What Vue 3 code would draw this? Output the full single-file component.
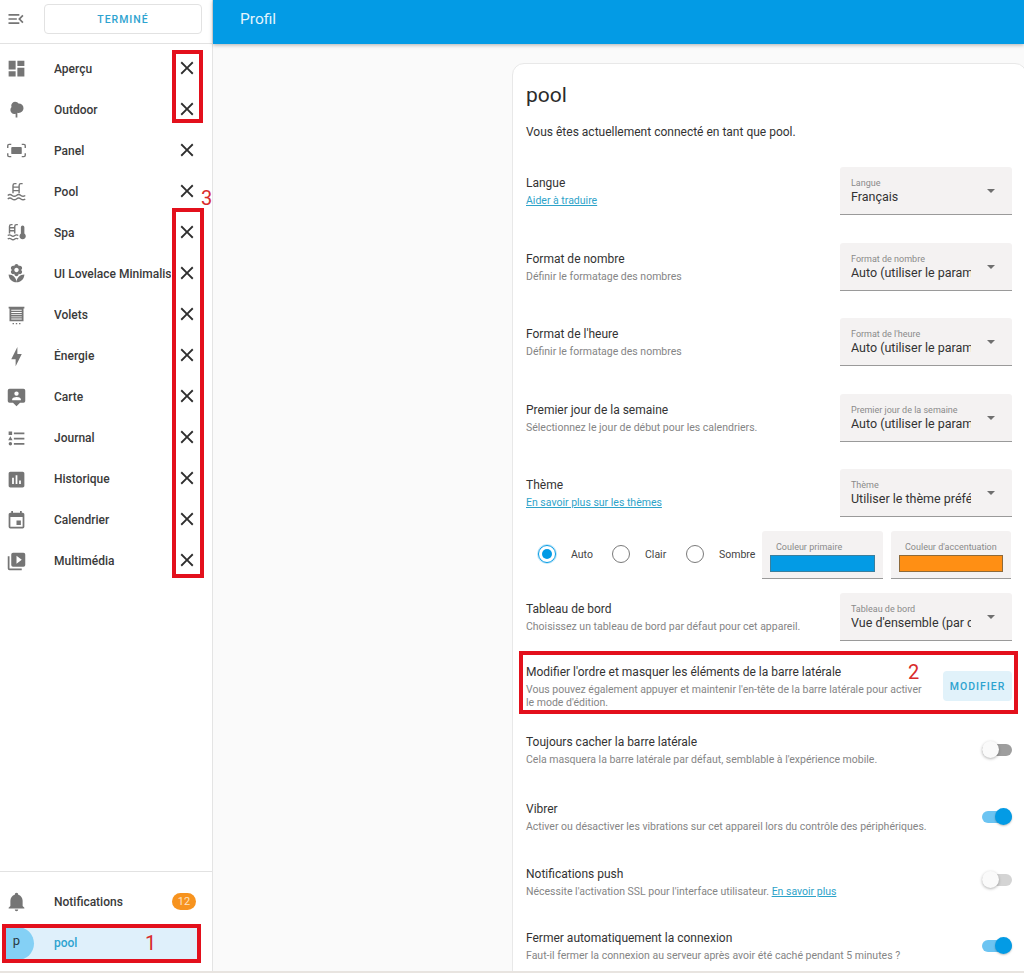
<script setup>
const closeIcon = 'M19,6.41L17.59,5L12,10.59L6.41,5L5,6.41L10.59,12L5,17.59L6.41,19L12,13.41L17.59,19L19,17.59L13.41,12L19,6.41Z'
const menuOpen = 'M21,15.61L19.59,17L14.58,12L19.59,7L21,8.39L17.44,12L21,15.61M3,6H16V8H3V6M3,13V11H13V13H3M3,18V16H16V18H3Z'
const bell = 'M21,19V20H3V19L5,17V11C5,7.9 7.03,5.17 10,4.29C10,4.19 10,4.1 10,4A2,2 0 0,1 12,2A2,2 0 0,1 14,4C14,4.1 14,4.19 14,4.29C16.97,5.17 19,7.9 19,11V17L21,19M14,21A2,2 0 0,1 12,23A2,2 0 0,1 10,21'

const navItems = [
  { label: 'Aperçu', d: 'M13,3V9H21V3M13,21H21V11H13M3,21H11V15H3M3,13H11V3H3V13Z' },
  { label: 'Outdoor', d: 'M11,21V16.74C10.53,16.91 10.03,17 9.5,17C7,17 5,15 5,12.5C5,11.23 5.5,10.09 6.36,9.27C6.13,8.73 6,8.13 6,7.5C6,5 8,3 10.5,3C12.06,3 13.44,3.8 14.25,5C14.33,5 14.41,5 14.5,5A5.5,5.5 0 0,1 20,10.5A5.5,5.5 0 0,1 14.5,16C14,16 13.5,15.93 13,15.79V21H11Z' },
  { label: 'Panel', d: 'M7,8H17A1,1 0 0,1 18,9V15A1,1 0 0,1 17,16H7A1,1 0 0,1 6,15V9A1,1 0 0,1 7,8Z', stroke: 'M2 9V6.5A1.5 1.5 0 013.5 5H6M18 5h2.5A1.5 1.5 0 0122 6.5V9M22 15v2.5a1.5 1.5 0 01-1.5 1.5H18M6 19H3.5A1.5 1.5 0 012 17.5V15' },
  { label: 'Pool', stroke: 'M8 14V5a2 2 0 012-2h2M15 14V5a2 2 0 012-2h2M8 7h7M8 11h7M2 16.5q2.5-2 5 0t5 0 5 0 5 0M2 20.5q2.5-2 5 0t5 0 5 0 5 0' },
  { label: 'Spa', d: 'M19 4a2 2 0 00-2 2v7.2a3.6 3.6 0 104 0V6a2 2 0 00-2-2Z', stroke: 'M4 13V5a2 2 0 012-2h1.5M10 13V5a2 2 0 012-2h1.5M4 6.5h6M4 10h6M2 15.5q2 -1.6 4 0t4 0 4 0M2 19.5q2 -1.6 4 0t4 0 4 0' },
  { label: 'UI Lovelace Minimalist', d: 'M12 22c4.97 0 9-4.03 9-9-4.97 0-9 4.03-9 9zM5.6 10.25c0 1.38 1.12 2.5 2.5 2.5.53 0 1.01-.16 1.42-.44l-.02.19c0 1.38 1.12 2.5 2.5 2.5s2.5-1.12 2.5-2.5l-.02-.19c.4.28.89.44 1.42.44 1.38 0 2.5-1.12 2.5-2.5 0-1-.59-1.85-1.43-2.25.84-.4 1.43-1.25 1.43-2.25 0-1.38-1.12-2.5-2.5-2.5-.53 0-1.01.16-1.42.44l.02-.19C14.5 2.12 13.38 1 12 1S9.5 2.12 9.5 3.5l.02.19c-.4-.28-.89-.44-1.42-.44-1.38 0-2.5 1.12-2.5 2.5 0 1 .59 1.85 1.43 2.25-.84.4-1.43 1.25-1.43 2.25zM12 5.5c1.38 0 2.5 1.12 2.5 2.5s-1.12 2.5-2.5 2.5S9.5 9.38 9.5 8s1.12-2.5 2.5-2.5zM3 13c0 4.97 4.03 9 9 9 0-4.97-4.03-9-9-9z' },
  { label: 'Volets', d: 'M3 2h18v2h-1v14.5H4V4H3V2Zm3 3.5v1h12v-1H6Zm0 2.5v1h12V8H6Zm0 2.5v1h12v-1H6Zm0 2.5v1h12v-1H6Zm0 2.5v1h12v-1H6ZM7.5 20.5h1.6v1.6H7.5v-1.6Zm3.7 0h1.6v1.6h-1.6v-1.6Zm3.7 0h1.6v1.6h-1.6v-1.6Z' },
  { label: 'Énergie', d: 'M11 15H6L13 1V9H18L11 23V15Z' },
  { label: 'Carte', d: 'M4 2h16a2 2 0 012 2v12a2 2 0 01-2 2h-4l-4 4-4-4H4a2 2 0 01-2-2V4a2 2 0 012-2zm8 3a2.5 2.5 0 100 5 2.5 2.5 0 000-5zm-5 10h10v-1c0-1.66-3.34-2.5-5-2.5S7 12.34 7 14v1z' },
  { label: 'Journal', d: 'M5,9.5L7.5,14H2.5L5,9.5M3,4H7V8H3V4M5,20A2,2 0 0,0 7,18A2,2 0 0,0 5,16A2,2 0 0,0 3,18A2,2 0 0,0 5,20M9,5V7H21V5H9M9,19H21V17H9V19M9,13H21V11H9V13Z' },
  { label: 'Historique', d: 'M5 3H19C20.1 3 21 3.9 21 5V19C21 20.1 20.1 21 19 21H5C3.9 21 3 20.1 3 19V5C3 3.9 3.9 3 5 3ZM7 10V17H9V10H7ZM11 7V17H13V7H11ZM15 13V17H17V13H15Z' },
  { label: 'Calendrier', d: 'M19,19H5V8H19M16,1V3H8V1H6V3H5C3.89,3 3,3.89 3,5V19A2,2 0 0,0 5,21H19A2,2 0 0,0 21,19V5C21,3.89 20.1,3 19,3H18V1M17,12H12V17H17V12Z' },
  { label: 'Multimédia', d: 'M4,6H2V20A2,2 0 0,0 4,22H18V20H4V6M8,2H20A2,2 0 0,1 22,4V16A2,2 0 0,1 20,18H8A2,2 0 0,1 6,16V4A2,2 0 0,1 8,2M12,14.5L18,10L12,5.5V14.5Z' }
]

const topRows = [
  { title: 'Langue', link: 'Aider à traduire', label: 'Langue', value: 'Français' },
  { title: 'Format de nombre', desc: 'Définir le formatage des nombres', label: 'Format de nombre', value: 'Auto (utiliser le paramètre)' },
  { title: "Format de l'heure", desc: 'Définir le formatage des nombres', label: "Format de l'heure", value: 'Auto (utiliser le paramètre)' },
  { title: 'Premier jour de la semaine', desc: 'Sélectionnez le jour de début pour les calendriers.', label: 'Premier jour de la semaine', value: 'Auto (utiliser le paramètre)' },
  { title: 'Thème', link: 'En savoir plus sur les thèmes', label: 'Thème', value: 'Utiliser le thème préféré' }
]

const radios = [
  { label: 'Auto', checked: true },
  { label: 'Clair' },
  { label: 'Sombre' }
]

const toggles = [
  { title: 'Toujours cacher la barre latérale', desc: 'Cela masquera la barre latérale par défaut, semblable à l\'expérience mobile.', state: 'off' },
  { title: 'Vibrer', desc: 'Activer ou désactiver les vibrations sur cet appareil lors du contrôle des périphériques.', state: 'on' },
  { title: 'Notifications push', desc: 'Nécessite l\'activation SSL pour l\'interface utilisateur.', more: 'En savoir plus', state: 'disabled' },
  { title: 'Fermer automatiquement la connexion', desc: 'Faut-il fermer la connexion au serveur après avoir été caché pendant 5 minutes ?', state: 'on' }
]
</script>

<template>
  <div class="page">
    <aside class="sidebar">
      <div class="side-head">
        <svg class="side-icon menu" viewBox="0 0 24 24"><path :d="menuOpen" /></svg>
        <button class="done">TERMINÉ</button>
      </div>

      <nav class="nav">
        <div v-for="item in navItems" :key="item.label" class="nav-item">
          <svg class="side-icon" viewBox="0 0 24 24">
            <path v-if="item.d" :d="item.d" />
            <path v-if="item.stroke" :d="item.stroke" class="stroked" />
          </svg>
          <span class="nav-label">{{ item.label }}</span>
          <svg class="close" viewBox="0 0 24 24"><path :d="closeIcon" /></svg>
        </div>
      </nav>

      <div class="side-foot">
        <div class="notif">
          <svg class="side-icon" viewBox="0 0 24 24"><path :d="bell" /></svg>
          <span class="nav-label">Notifications</span>
          <span class="badge">12</span>
        </div>
        <div class="user">
          <span class="avatar">p</span>
          <span class="user-name">pool</span>
        </div>
      </div>

      <div class="mark mark-a"></div>
      <div class="mark mark-b"></div>
      <div class="mark mark-c"></div>
      <span class="mark-num num-1">1</span>
      <span class="mark-num num-3">3</span>
    </aside>

    <main class="main">
      <header class="topbar">Profil</header>
      <div class="content">
        <section class="card">
          <h1>pool</h1>
          <p class="intro">Vous êtes actuellement connecté en tant que pool.</p>

          <div v-for="row in topRows" :key="row.title" class="row select-row">
            <div class="row-text">
              <div class="row-title">{{ row.title }}</div>
              <a v-if="row.link" class="link row-desc">{{ row.link }}</a>
              <div v-else class="row-desc">{{ row.desc }}</div>
            </div>
            <div class="select">
              <span class="select-label">{{ row.label }}</span>
              <span class="select-value">{{ row.value }}</span>
              <i class="arrow"></i>
            </div>
          </div>

          <div class="theme-row">
            <div class="radios">
              <label v-for="r in radios" :key="r.label" class="radio">
                <i class="dot" :class="{ checked: r.checked }"></i>
                <span>{{ r.label }}</span>
              </label>
            </div>
            <div class="color-field">
              <span class="color-label">Couleur primaire</span>
              <i class="swatch primary"></i>
            </div>
            <div class="color-field">
              <span class="color-label">Couleur d'accentuation</span>
              <i class="swatch accent"></i>
            </div>
          </div>

          <div class="row dash-row">
            <div class="row-text">
              <div class="row-title">Tableau de bord</div>
              <div class="row-desc">Choisissez un tableau de bord par défaut pour cet appareil.</div>
            </div>
            <div class="select">
              <span class="select-label">Tableau de bord</span>
              <span class="select-value">Vue d'ensemble (par défaut)</span>
              <i class="arrow"></i>
            </div>
          </div>

          <div class="row edit-row">
            <div class="row-text edit-text">
              <div class="row-title">Modifier l'ordre et masquer les éléments de la barre latérale</div>
              <div class="row-desc">Vous pouvez également appuyer et maintenir l'en-tête de la barre latérale pour activer le mode d'édition.</div>
            </div>
            <button class="edit-btn">MODIFIER</button>
            <div class="mark mark-edit"></div>
            <span class="mark-num num-2">2</span>
          </div>

          <div class="toggles">
            <div v-for="t in toggles" :key="t.title" class="row toggle-row">
              <div class="row-text">
                <div class="row-title">{{ t.title }}</div>
                <div class="row-desc">{{ t.desc }} <a v-if="t.more" class="link">{{ t.more }}</a></div>
              </div>
              <div class="toggle" :class="t.state"><i></i></div>
            </div>
          </div>
        </section>
      </div>
    </main>
  </div>
</template>

<style>
html, body {
  margin: 0;
  background: #fff;
}
</style>

<style scoped>
.page {
  display: flex;
  width: 1024px;
  height: 973px;
  overflow: hidden;
  font-family: Roboto, "Liberation Sans", sans-serif;
  color: #2b2b2b;
  border-bottom: 2px solid #e8e4e0;
  box-sizing: border-box;
}

.sidebar {
  position: relative;
  display: flex;
  flex-direction: column;
  flex: 0 0 212px;
  box-sizing: border-box;
  border-right: 1px solid #e4e4e4;
  background: #fff;
}

.side-head {
  display: flex;
  align-items: center;
  height: 44px;
  box-sizing: border-box;
  padding: 0 10px 5px 6px;
  border-bottom: 1px solid #e2e2e2;
}

.side-icon {
  flex: none;
  width: 21px;
  height: 21px;
  fill: #757575;
}

.side-icon .stroked {
  fill: none;
  stroke: #757575;
  stroke-width: 1.6;
}

.menu {
  width: 20px;
  height: 20px;
}

.done {
  width: 158px;
  height: 30px;
  margin-left: 18px;
  padding: 0;
  background: #fff;
  border: 1px solid #e2e2e2;
  border-radius: 4px;
  color: #2ea3d0;
  font: 500 10.5px Roboto, sans-serif;
  letter-spacing: 1px;
}

.nav {
  display: flex;
  flex-direction: column;
  flex: 1;
  padding-top: 4px;
}

.nav-item,
.notif {
  display: flex;
  align-items: center;
  height: 41.08px;
  padding-left: 6px;
}

.nav-label {
  width: 117px;
  margin-left: 27px;
  overflow: hidden;
  white-space: nowrap;
  font-size: 12px;
  font-weight: 500;
  color: #3a3a3a;
}

.close {
  width: 22px;
  height: 22px;
  margin: -1px 0 1px 5px;
  fill: #2e2e2e;
}

.side-foot {
  border-top: 1px solid #e2e2e2;
  padding-top: 9px;
  height: 100px;
  box-sizing: border-box;
}

.badge {
  width: 24px;
  height: 17px;
  margin-left: 1px;
  border-radius: 9px;
  background: #f7931e;
  color: #fde3c4;
  font-size: 11px;
  line-height: 17px;
  text-align: center;
}

.user {
  display: flex;
  align-items: center;
  height: 33px;
  margin: 5px 11px 0 4px;
  background: #dff0fb;
  border-radius: 4px;
}

.avatar {
  width: 30px;
  height: 33px;
  box-sizing: border-box;
  padding-right: 5px;
  border-radius: 0 17px 17px 0;
  background: #84d0f5;
  color: #2b3a44;
  font-size: 13px;
  line-height: 28px;
  text-align: center;
}

.user-name {
  margin: -2px 0 0 20px;
  font-size: 12px;
  font-weight: 500;
  color: #2ea3d0;
}

.mark {
  position: absolute;
  box-sizing: border-box;
  border: 4px solid #e3101c;
  pointer-events: none;
}

.mark-a {
  left: 172px;
  top: 50px;
  width: 31px;
  height: 73px;
}

.mark-b {
  left: 172px;
  top: 208px;
  width: 32px;
  height: 370px;
}

.mark-c {
  left: 2px;
  top: 924px;
  width: 199px;
  height: 39px;
}

.mark-num {
  position: absolute;
  color: #d92b2b;
  font-size: 20px;
  line-height: 20px;
}

.num-1 {
  left: 145px;
  top: 933px;
}

.num-3 {
  left: 201px;
  top: 188px;
}

.num-2 {
  left: 382px;
  top: 0;
}

.main {
  flex: 1;
  min-width: 0;
  background: #fafafa;
}

.topbar {
  position: relative;
  height: 44px;
  box-sizing: border-box;
  padding-left: 27px;
  background: #039be5;
  box-shadow: 0 1px 4px rgba(0, 0, 0, 0.3);
  color: #e4f4fc;
  font-size: 15.5px;
  line-height: 39px;
}

.content {
  padding: 19px 0 0 299px;
}

.card {
  width: 515px;
  height: 930px;
  box-sizing: border-box;
  padding: 17px 14px 0 13px;
  background: #fff;
  border: 1px solid #e8e8e8;
  border-radius: 12px;
}

h1 {
  margin: 0;
  font-size: 21px;
  font-weight: 400;
  line-height: 28px;
  color: #2b2b2b;
}

.intro {
  margin: 15px 0 27px;
  font-size: 12px;
  line-height: 16px;
  color: #333;
}

.row {
  display: flex;
  align-items: center;
  justify-content: space-between;
}

.select-row {
  height: 48px;
  margin-bottom: 27.5px;
}

.row-text {
  padding-top: 1px;
}

.row-title {
  font-size: 12px;
  line-height: 16px;
  color: #333;
}

.row-desc {
  display: block;
  margin-top: 4px;
  font-size: 10.5px;
  line-height: 12.5px;
  color: #858585;
}

.link {
  color: #2ea3c9;
  text-decoration: underline;
}

.select {
  position: relative;
  display: flex;
  flex-direction: column;
  flex: none;
  box-sizing: border-box;
  width: 172px;
  height: 48px;
  padding: 11px 41px 0 11px;
  background: #f4f2f2;
  border-bottom: 1px solid #9a9a9a;
  border-radius: 3px 3px 0 0;
  overflow: hidden;
}

.select-label {
  font-size: 9px;
  line-height: 11px;
  color: #8a8a8a;
  white-space: nowrap;
}

.select-value {
  font-size: 12.5px;
  line-height: 16px;
  color: #333;
  white-space: nowrap;
  overflow: hidden;
}

.arrow {
  position: absolute;
  right: 17px;
  top: 22px;
  width: 0;
  height: 0;
  border-left: 4px solid transparent;
  border-right: 4px solid transparent;
  border-top: 4px solid #6f6f6f;
}

.theme-row {
  display: flex;
  align-items: stretch;
  height: 48px;
  margin-top: -13.5px;
}

.radios {
  display: flex;
  flex: 0 0 236px;
  align-items: center;
  padding: 0 0 2px 12px;
  box-sizing: border-box;
}

.radio {
  display: flex;
  align-items: center;
  width: 74px;
  font-size: 10.5px;
  color: #444;
}

.dot {
  position: relative;
  flex: none;
  box-sizing: border-box;
  width: 18px;
  height: 18px;
  margin-right: 15px;
  border: 1.6px solid #7a7a7a;
  border-radius: 50%;
}

.dot.checked {
  border-color: #039be5;
  box-shadow: 0 0 0 1px rgba(3, 155, 229, 0.25);
}

.dot.checked::after {
  content: '';
  position: absolute;
  inset: 3px;
  border-radius: 50%;
  background: #039be5;
}

.color-field {
  display: flex;
  flex-direction: column;
  flex: none;
  box-sizing: border-box;
  width: 121px;
  margin-right: 8px;
  padding: 11px 8px 0;
  background: #f4f2f2;
  border-bottom: 1px solid #9a9a9a;
  border-radius: 3px 3px 0 0;
}

.color-field:last-child {
  width: 120px;
  margin-right: 0;
}

.color-label {
  padding-left: 6px;
  font-size: 9px;
  line-height: 11px;
  color: #8a8a8a;
  white-space: nowrap;
}

.swatch {
  height: 17px;
  margin-top: 2px;
  box-sizing: border-box;
  border: 1px solid #555;
}

.swatch.primary {
  background: #039be5;
  border-color: #3a7f9e;
}

.swatch.accent {
  background: #ff8f14;
  border-color: #8d6a3b;
}

.dash-row {
  height: 48px;
  margin-top: 14px;
}

.edit-row {
  position: relative;
  height: 48px;
  margin-top: 21px;
}

.edit-text {
  width: 404px;
}

.edit-btn {
  flex: none;
  width: 69px;
  height: 30px;
  padding: 0;
  border: 0;
  border-radius: 4px;
  background: #e1f2fa;
  color: #2ea3d0;
  font: 500 10.5px Roboto, sans-serif;
  letter-spacing: 1px;
}

.mark-edit {
  left: -7px;
  top: -11px;
  width: 499px;
  height: 63px;
}

.toggles {
  margin-top: 23px;
}

.toggle-row {
  height: 34px;
}

.toggle-row:nth-child(2) {
  margin-top: 33px;
}

.toggle-row:nth-child(3) {
  margin-top: 31px;
}

.toggle-row:nth-child(4) {
  margin-top: 30px;
}

.toggle {
  position: relative;
  flex: none;
  width: 30px;
  height: 12px;
  border-radius: 6px;
}

.toggle i {
  position: absolute;
  top: -3px;
  width: 17px;
  height: 17px;
  border-radius: 50%;
}

.toggle.off {
  background: #9e9e9e;
}

.toggle.disabled {
  margin-bottom: 4px;
  background: #d4d4d4;
}

.toggle.off i,
.toggle.disabled i {
  left: 0;
  background: #fafafa;
  box-shadow: 0 1px 3px rgba(0, 0, 0, 0.3);
}

.toggle.on {
  background: #6cc4f2;
}

.toggle.on i {
  right: 0;
  background: #039be5;
  box-shadow: 0 1px 2px rgba(0, 0, 0, 0.25);
}
</style>
